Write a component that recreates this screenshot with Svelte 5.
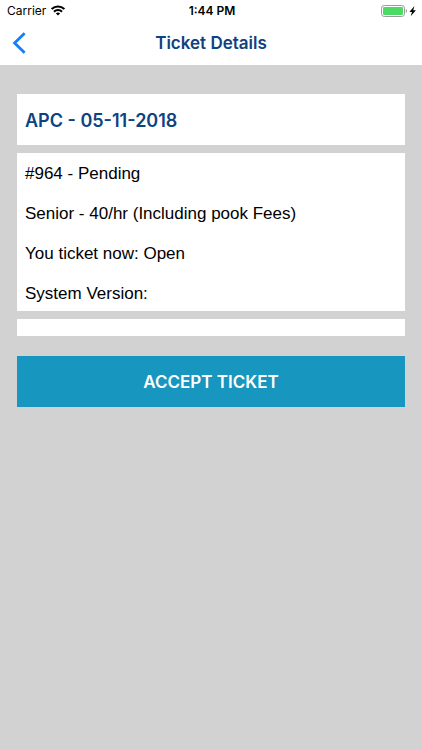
<script lang="ts">
  const ticket = {
    title: 'APC - 05-11-2018',
    lines: [
      '#964 - Pending',
      'Senior - 40/hr (Including pook Fees)',
      'You ticket now: Open',
      'System Version:'
    ]
  };
</script>

<div class="screen">
  <div class="status-bar">
    <div class="carrier">
      <span>Carrier</span>
      <svg width="14" height="11" viewBox="0 0 14 11" aria-hidden="true">
        <g fill="none" stroke="#000" stroke-width="2.1">
          <path d="M0.7 4.1a9 9 0 0 1 12.6 0" />
          <path d="M3 6.7a5.7 5.7 0 0 1 8 0" />
        </g>
        <path d="M7 10.6L4.9 8.5a3 3 0 0 1 4.2 0z" fill="#000" />
      </svg>
    </div>
    <span class="time">1:44 PM</span>
    <div class="battery">
      <svg width="36" height="12" viewBox="0 0 36 12" aria-hidden="true">
        <rect x="0.5" y="0.5" width="23" height="11" rx="2.8" fill="#fff" stroke="#9b9b9b" />
        <rect x="2" y="2" width="20" height="8" rx="1.2" fill="#4cd964" />
        <path d="M24.8 4v4a2.2 2.2 0 0 0 0-4z" fill="#9b9b9b" />
        <path d="M33.4 1l-5 5.9h2.6l-1.3 4.3 5.2-6h-2.7z" fill="#000" />
      </svg>
    </div>
  </div>

  <header class="nav-bar">
    <button class="back" type="button" aria-label="Back">
      <svg width="14" height="22" viewBox="0 0 14 22" aria-hidden="true">
        <path d="M12.6 1.2L2.6 11l10 9.8" fill="none" stroke="#147efb" stroke-width="2.8" />
      </svg>
    </button>
    <h1>Ticket Details</h1>
  </header>

  <main>
    <h2 class="card title">{ticket.title}</h2>
    <div class="card details">
      {#each ticket.lines as line}
        <p>{line}</p>
      {/each}
    </div>
    <div class="card empty"></div>
    <button class="accept" type="button">ACCEPT TICKET</button>
  </main>
</div>

<style>
  :global(body) { background: #d2d2d2; }
  .screen {
    min-height: 100vh;
    background: #d2d2d2;
    color: #000;
    font-family: Inter, "Liberation Sans", sans-serif;
  }
  h1, h2, p { margin: 0; }
  button { border: 0; padding: 0; font-family: inherit; cursor: pointer; }
  svg { display: block; }

  .status-bar {
    display: grid;
    grid-template-columns: 1fr auto 1fr;
    align-items: center;
    height: 21px;
    padding: 0 5px 0 7px;
    background: #fff;
    font-size: 12px;
  }
  .carrier { display: flex; align-items: center; gap: 5px; }
  .time { font-weight: 600; }
  .battery { justify-self: end; }

  .nav-bar {
    display: grid;
    grid-template-columns: 1fr auto 1fr;
    align-items: center;
    height: 44px;
    padding: 0 12px;
    background: #fff;
  }
  .back { justify-self: start; background: none; }
  h1 { color: #0e4280; font-size: 17px; font-weight: 600; }

  main { display: flex; flex-direction: column; gap: 8px; padding: 29px 17px; }
  .card { background: #fff; padding: 8px; }
  .title {
    padding: 17px 8px 15px;
    color: #0e4280;
    font-size: 18px;
    font-weight: 600;
    line-height: 19px;
  }
  .details {
    display: flex;
    flex-direction: column;
    gap: 20px;
    padding: 11px 8px 7px;
    font-family: "Liberation Sans", Arial, sans-serif;
    font-size: 17px;
    line-height: 20px;
  }
  .empty { padding-bottom: 9px; }
  .accept {
    margin-top: 12px;
    padding: 17px 8px 15px;
    background: #1796c0;
    color: #fff;
    font-size: 17px;
    font-weight: 600;
    line-height: 19px;
  }
</style>
